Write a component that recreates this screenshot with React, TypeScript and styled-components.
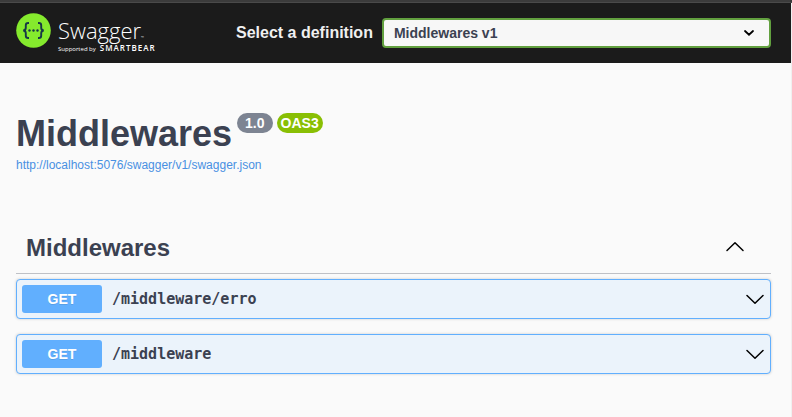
import React, { useState } from "react";
import styled, { createGlobalStyle } from "styled-components";

const GlobalStyle = createGlobalStyle`
  *, *::before, *::after { box-sizing: border-box; }
  html { min-height: 100%; background: #fafafa; }
  body {
    margin: 0;
    color: #3b4151;
    font-family: "Liberation Sans", Arial, sans-serif;
  }
`;

const Page = styled.div`
  border-right: 1px solid #f0f0f0;
`;

const BrowserEdge = styled.div`
  height: 3px;
  background: #3b3b3b;
  border-bottom: 1px solid #4a4a4a;
`;

const Topbar = styled.header`
  display: flex;
  align-items: flex-start;
  height: 60px;
  padding: 10px 20px 0 16px;
  background: #1b1b1b;
`;

const Logo = styled.a`
  display: flex;
  flex: none;
  gap: 7px;
  width: 220px;
  color: #fff;
  text-decoration: none;
`;

const LogoMark = styled.svg`
  display: block;
  width: 35px;
  height: 35px;
`;

const LogoText = styled.span`
  display: flex;
  flex-direction: column;
  padding-top: 5px;
  font-family: "Open Sans", "Noto Sans", sans-serif;
`;

const Wordmark = styled.span`
  font-size: 22px;
  font-weight: 300;
  line-height: 25px;
`;

const Trademark = styled.span`
  font-size: 4px;
  line-height: 1;
`;

const Tagline = styled.span`
  display: flex;
  gap: 4px;
  align-items: baseline;
  font-size: 6px;
  line-height: 10px;
  white-space: nowrap;
`;

const Brand = styled.strong`
  font-size: 8px;
  font-weight: 600;
  line-height: 10px;
  letter-spacing: 1px;
`;

const DefinitionPicker = styled.label`
  display: flex;
  flex: 1;
  align-items: center;
  gap: 9px;
  min-width: 0;
  padding-top: 5px;
  color: #f0f0f0;
  font-size: 16px;
  font-weight: 700;
  white-space: nowrap;
`;

const SelectBox = styled.span`
  display: grid;
  flex: 1;
  align-items: center;
  min-width: 0;
  > * { grid-area: 1 / 1; }
`;

const Select = styled.select`
  width: 100%;
  height: 30px;
  padding: 0 40px 0 10px;
  appearance: none;
  border: 2px solid #62a03f;
  border-radius: 4px;
  background: #f7f7f7;
  color: #3b4151;
  font: 700 14px "Liberation Sans", Arial, sans-serif;
`;

const SelectArrow = styled.svg`
  justify-self: end;
  width: 10px;
  height: 6px;
  margin-right: 17px;
  pointer-events: none;
`;

const Content = styled.main`
  padding: 50px 20px 43px 16px;
`;

const Info = styled.section`
  display: flex;
  flex-direction: column;
  align-items: flex-start;
`;

const TitleRow = styled.div`
  display: flex;
  align-items: flex-start;
  gap: 5px;
`;

const Badges = styled.div`
  display: flex;
  gap: 4px;
`;

const Title = styled.h1`
  margin: 0;
  font-size: 36px;
  line-height: 42px;
`;

const Badge = styled.span<{ $color: string; $wide?: boolean }>`
  padding: 0 ${(p) => (p.$wide ? 8 : 4)}px;
  border-radius: 10px;
  background: ${(p) => p.$color};
  color: #fff;
  font-size: 14px;
  font-weight: 700;
  line-height: 20px;
`;

const SpecLink = styled.a`
  margin-top: 2px;
  color: #4990e2;
  font-size: 12px;
  line-height: 16px;
  text-decoration: none;
`;

const Tag = styled.section`
  margin-top: 50px;
`;

const TagHeading = styled.h2`
  margin: 0 0 5px;
  border-bottom: 1px solid #bfc1c6;
`;

const TagButton = styled.button`
  display: flex;
  align-items: center;
  justify-content: space-between;
  width: 100%;
  padding: 10px 26px 11px 10px;
  border: 0;
  background: none;
  color: inherit;
  font: 700 24px/29px "Liberation Sans", Arial, sans-serif;
  cursor: pointer;
`;

const Arrow = styled.svg`
  flex: none;
  width: 20px;
  height: 20px;
`;

const Operations = styled.div`
  display: grid;
  gap: 15px;
`;

const Operation = styled.button`
  display: flex;
  align-items: center;
  width: 100%;
  padding: 5px;
  border: 1px solid #61affe;
  border-radius: 4px;
  background: #ebf3fb;
  box-shadow: 0 0 3px rgba(0, 0, 0, 0.19);
  color: #3b4151;
  text-align: left;
  cursor: pointer;
`;

const Method = styled.span`
  width: 80px;
  border-radius: 3px;
  background: #61affe;
  color: #fff;
  font: 700 14px/28px "Liberation Sans", Arial, sans-serif;
  text-align: center;
  text-shadow: 0 1px 0 rgba(0, 0, 0, 0.1);
`;

const Path = styled.span`
  flex: 1;
  padding: 0 10px;
  font: 700 15px/20px Consolas, "DejaVu Sans Mono", monospace;
`;

const paths = ["/middleware/erro", "/middleware"];

function Chevron({ up = false }: { up?: boolean }) {
  return (
    <Arrow viewBox="0 0 20 20" fill="none" stroke="#000" strokeWidth="1.5" strokeLinecap="round" strokeLinejoin="round" aria-hidden="true">
      <path d={up ? "M2 12.5 10 4.7 18 12.5" : "M2 6.5 10 14.3 18 6.5"} />
    </Arrow>
  );
}

function SwaggerMark() {
  return (
    <LogoMark viewBox="0 0 35 35" aria-hidden="true">
      <circle cx="17.5" cy="17.5" r="17.3" fill="#85ea2d" />
      <g fill="none" stroke="#173647" strokeWidth="1.9">
        <path d="M13 10h-.8c-1.8 0-2.4.8-2.4 2.3v2.4c0 1.8-.8 2.7-2.6 2.8 1.8.1 2.6 1 2.6 2.8v2.4c0 1.5.6 2.3 2.4 2.3h.8" />
        <path d="M22 10h.8c1.8 0 2.4.8 2.4 2.3v2.4c0 1.8.8 2.7 2.6 2.8-1.8.1-2.6 1-2.6 2.8v2.4c0 1.5-.6 2.3-2.4 2.3H22" />
      </g>
      <g fill="#173647">
        <circle cx="13.5" cy="17.5" r="1.2" />
        <circle cx="17.5" cy="17.5" r="1.2" />
        <circle cx="21.5" cy="17.5" r="1.2" />
      </g>
    </LogoMark>
  );
}

export default function App() {
  const [open, setOpen] = useState(true);
  return (
    <>
      <GlobalStyle />
      <BrowserEdge />
      <Page>
        <Topbar>
          <Logo href="#">
            <SwaggerMark />
            <LogoText>
              <Wordmark>Swagger<Trademark>™</Trademark></Wordmark>
              <Tagline>Supported by <Brand>SMARTBEAR</Brand></Tagline>
            </LogoText>
          </Logo>
          <DefinitionPicker htmlFor="definition">
            Select a definition
            <SelectBox>
              <Select id="definition">
                <option>Middlewares v1</option>
              </Select>
              <SelectArrow viewBox="0 0 10 6" fill="none" stroke="#000" strokeWidth="1.8" strokeLinecap="round" aria-hidden="true">
                <path d="M1 1 5 4.7 9 1" />
              </SelectArrow>
            </SelectBox>
          </DefinitionPicker>
        </Topbar>
        <Content>
          <Info>
            <TitleRow>
              <Title>Middlewares</Title>
              <Badges>
                <Badge $color="#7d8492" $wide>1.0</Badge>
                <Badge $color="#89bf04">OAS3</Badge>
              </Badges>
            </TitleRow>
            <SpecLink href="http://localhost:5076/swagger/v1/swagger.json">
              http://localhost:5076/swagger/v1/swagger.json
            </SpecLink>
          </Info>
          <Tag>
            <TagHeading>
              <TagButton type="button" aria-expanded={open} onClick={() => setOpen(!open)}>
                Middlewares
                <Chevron up={open} />
              </TagButton>
            </TagHeading>
            {open && (
              <Operations>
                {paths.map((path) => (
                  <Operation type="button" key={path}>
                    <Method>GET</Method>
                    <Path>{path}</Path>
                    <Chevron />
                  </Operation>
                ))}
              </Operations>
            )}
          </Tag>
        </Content>
      </Page>
    </>
  );
}
